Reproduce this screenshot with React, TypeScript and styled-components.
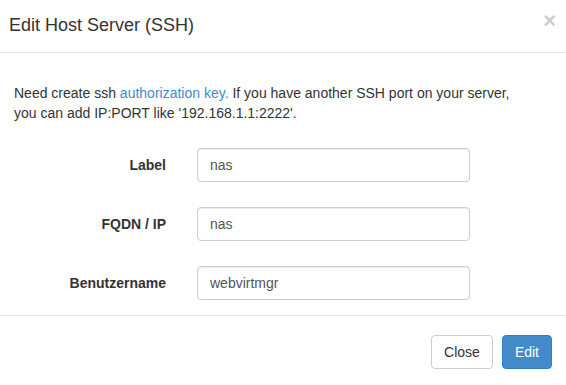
import React from "react";
import styled, { createGlobalStyle } from "styled-components";

const GlobalStyle = createGlobalStyle`
  html, body { margin: 0; padding: 0; background: #fff; }
  body {
    font-family: "Liberation Sans", Arial, Helvetica, sans-serif;
    font-size: 14px;
    line-height: 20px;
    color: #333;
  }
  * { box-sizing: border-box; }
`;

type Field = {
  label: string;
  value: string;
};

const fields: Field[] = [
  { label: "Label", value: "nas" },
  { label: "FQDN / IP", value: "nas" },
  { label: "Benutzername", value: "webvirtmgr" },
];

export default function App() {
  return (
    <>
      <GlobalStyle />
      <Modal>
        <Header>
          <Title>Edit Host Server (SSH)</Title>
          <CloseX type="button" aria-label="Close">×</CloseX>
        </Header>
        <Body>
          <Intro>
            Need create ssh <Link href="#">authorization key.</Link> If you have another SSH port on your server,
            <br />
            you can add IP:PORT like '192.168.1.1:2222'.
          </Intro>
          <Form>
            {fields.map((f) => (
              <Row key={f.label}>
                <FieldLabel>{f.label}</FieldLabel>
                <Input defaultValue={f.value} />
              </Row>
            ))}
          </Form>
        </Body>
        <Footer>
          <Button type="button">Close</Button>
          <Button type="button" primary>Edit</Button>
        </Footer>
      </Modal>
    </>
  );
}

const Modal = styled.div`
  width: 566px;
  display: flex;
  flex-direction: column;
  background: #fff;
`;

const Header = styled.div`
  display: flex;
  align-items: flex-start;
  justify-content: space-between;
  padding: 12px 10px 14px 9px;
  border-bottom: 1px solid #e5e5e5;
`;

const Title = styled.h4`
  margin: 0;
  font-size: 18px;
  font-weight: 400;
  line-height: 26px;
  color: #333;
`;

const CloseX = styled.button`
  background: transparent;
  border: 0;
  padding: 0;
  margin-top: 1px;
  font-family: "Liberation Sans", Arial, sans-serif;
  font-size: 22px;
  font-weight: 700;
  line-height: 16px;
  color: #000;
  opacity: 0.2;
  cursor: pointer;
`;

const Body = styled.div`
  padding: 30px 14px 15px 14px;
`;

const Intro = styled.p`
  margin: 0 0 25px 0;
`;

const Link = styled.a`
  color: #428bca;
  text-decoration: none;
`;

const Form = styled.div`
  display: flex;
  flex-direction: column;
  gap: 25px;
`;

const Row = styled.div`
  display: grid;
  grid-template-columns: 152px 273px;
  column-gap: 31px;
  align-items: center;
`;

const FieldLabel = styled.label`
  text-align: right;
  font-weight: 700;
  color: #333;
`;

const Input = styled.input`
  height: 34px;
  width: 100%;
  padding: 6px 12px;
  font-family: "Liberation Sans", Arial, sans-serif;
  font-size: 14px;
  line-height: 20px;
  color: #555;
  background: #fff;
  border: 1px solid #ccc;
  border-radius: 4px;
  box-shadow: inset 0 1px 1px rgba(0, 0, 0, 0.075);
  outline: none;
`;

const Footer = styled.div`
  display: flex;
  justify-content: flex-end;
  gap: 9px;
  padding: 19px 14px 16px 14px;
  border-top: 1px solid #e5e5e5;
`;

const Button = styled.button<{ primary?: boolean }>`
  height: 34px;
  padding: 6px 12px;
  font-family: "Liberation Sans", Arial, sans-serif;
  font-size: 14px;
  line-height: 20px;
  border-radius: 4px;
  cursor: pointer;
  color: ${(p) => (p.primary ? "#fff" : "#333")};
  background: ${(p) => (p.primary ? "#428bca" : "#fff")};
  border: 1px solid ${(p) => (p.primary ? "#357ebd" : "#ccc")};
`;
